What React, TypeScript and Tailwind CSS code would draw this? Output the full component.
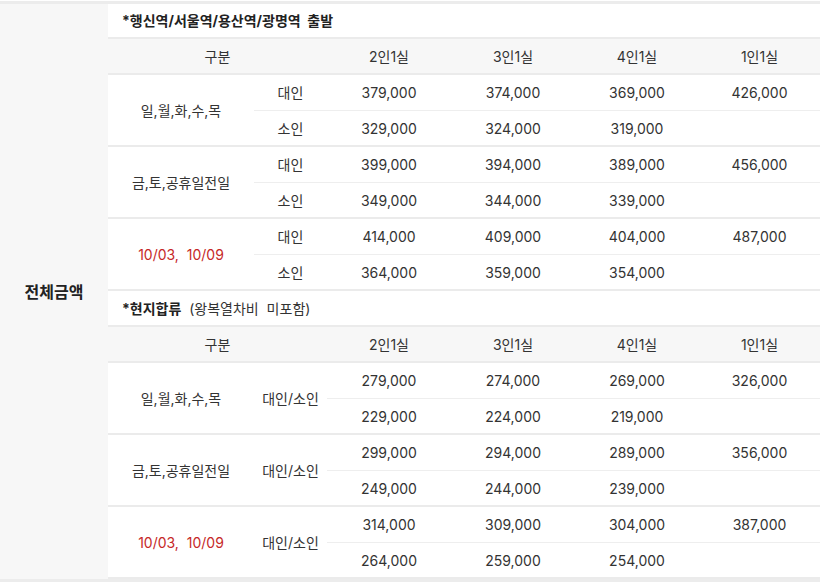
import React from 'react';

type PriceRow = { label?: string; prices: string[] };
type Group = { day: string; red?: boolean; rows: PriceRow[] };

const roomHeads = ['2인1실', '3인1실', '4인1실', '1인1실'];

const stationGroups: Group[] = [
  { day: '일,월,화,수,목', rows: [{ label: '대인', prices: ['379,000', '374,000', '369,000', '426,000'] }, { label: '소인', prices: ['329,000', '324,000', '319,000', ''] }] },
  { day: '금,토,공휴일전일', rows: [{ label: '대인', prices: ['399,000', '394,000', '389,000', '456,000'] }, { label: '소인', prices: ['349,000', '344,000', '339,000', ''] }] },
  { day: '10/03,  10/09', red: true, rows: [{ label: '대인', prices: ['414,000', '409,000', '404,000', '487,000'] }, { label: '소인', prices: ['364,000', '359,000', '354,000', ''] }] },
];

const localGroups: Group[] = [
  { day: '일,월,화,수,목', rows: [{ prices: ['279,000', '274,000', '269,000', '326,000'] }, { prices: ['229,000', '224,000', '219,000', ''] }] },
  { day: '금,토,공휴일전일', rows: [{ prices: ['299,000', '294,000', '289,000', '356,000'] }, { prices: ['249,000', '244,000', '239,000', ''] }] },
  { day: '10/03,  10/09', red: true, rows: [{ prices: ['314,000', '309,000', '304,000', '387,000'] }, { prices: ['264,000', '259,000', '254,000', ''] }] },
];

const HeaderRow = () => (
  <div className="grid h-[36px] grid-cols-[219px_124px_124px_124px_1fr] items-center border-b-2 border-[#ebebeb] bg-[#f7f7f7] text-center">
    <div>구분</div>
    {roomHeads.map((h) => (
      <div key={h}>{h}</div>
    ))}
  </div>
);

const DayCell = ({ group }: { group: Group }) => (
  <div className={`flex w-[146px] shrink-0 items-center justify-center whitespace-pre ${group.red ? 'text-[#c62828]' : ''}`}>
    {group.day}
  </div>
);

const StationGroup = ({ group }: { group: Group }) => (
  <div className="flex border-b-2 border-[#ebebeb]">
    <DayCell group={group} />
    <div className="flex flex-1 flex-col">
      {group.rows.map((r, i) => (
        <div
          key={i}
          className={`grid grid-cols-[73px_124px_124px_124px_1fr] items-center text-center ${i === 0 ? 'h-[36px] border-b border-[#eeeeee]' : 'h-[34px]'}`}
        >
          <div>{r.label}</div>
          {r.prices.map((p, j) => (
            <div key={j}>{p}</div>
          ))}
        </div>
      ))}
    </div>
  </div>
);

const LocalGroup = ({ group }: { group: Group }) => (
  <div className="flex border-b-2 border-[#ebebeb]">
    <DayCell group={group} />
    <div className="flex w-[73px] shrink-0 items-center justify-center">대인/소인</div>
    <div className="flex flex-1 flex-col">
      {group.rows.map((r, i) => (
        <div
          key={i}
          className={`grid grid-cols-[124px_124px_124px_1fr] items-center text-center ${i === 0 ? 'h-[36px] border-b border-[#eeeeee]' : 'h-[34px]'}`}
        >
          {r.prices.map((p, j) => (
            <div key={j}>{p}</div>
          ))}
        </div>
      ))}
    </div>
  </div>
);

export default function App() {
  return (
    <div
      className="min-h-screen bg-white pt-[1px] text-[14px] text-[#333333]"
      style={{ fontFamily: 'Inter, "Noto Sans CJK KR", sans-serif' }}
    >
      <div className="flex border-y-[3px] border-[#ececec]">
        <div className="flex w-[108px] shrink-0 items-center justify-center bg-[#f7f7f7] text-[16px] font-bold text-[#222222]">
          전체금액
        </div>
        <div className="flex-1">
          <div className="flex h-[35px] items-center border-b-2 border-[#ebebeb] pl-[14px] font-bold text-[#222222] whitespace-pre">
            *행신역/서울역/용산역/광명역  출발
          </div>
          <HeaderRow />
          {stationGroups.map((g) => (
            <StationGroup key={g.day} group={g} />
          ))}
          <div className="flex h-[36px] items-center border-b-2 border-[#ebebeb] pl-[14px] whitespace-pre">
            <span className="font-bold text-[#222222]">*현지합류</span>
            <span>  (왕복열차비  미포함)</span>
          </div>
          <HeaderRow />
          {localGroups.map((g) => (
            <LocalGroup key={g.day} group={g} />
          ))}
        </div>
      </div>
    </div>
  );
}
